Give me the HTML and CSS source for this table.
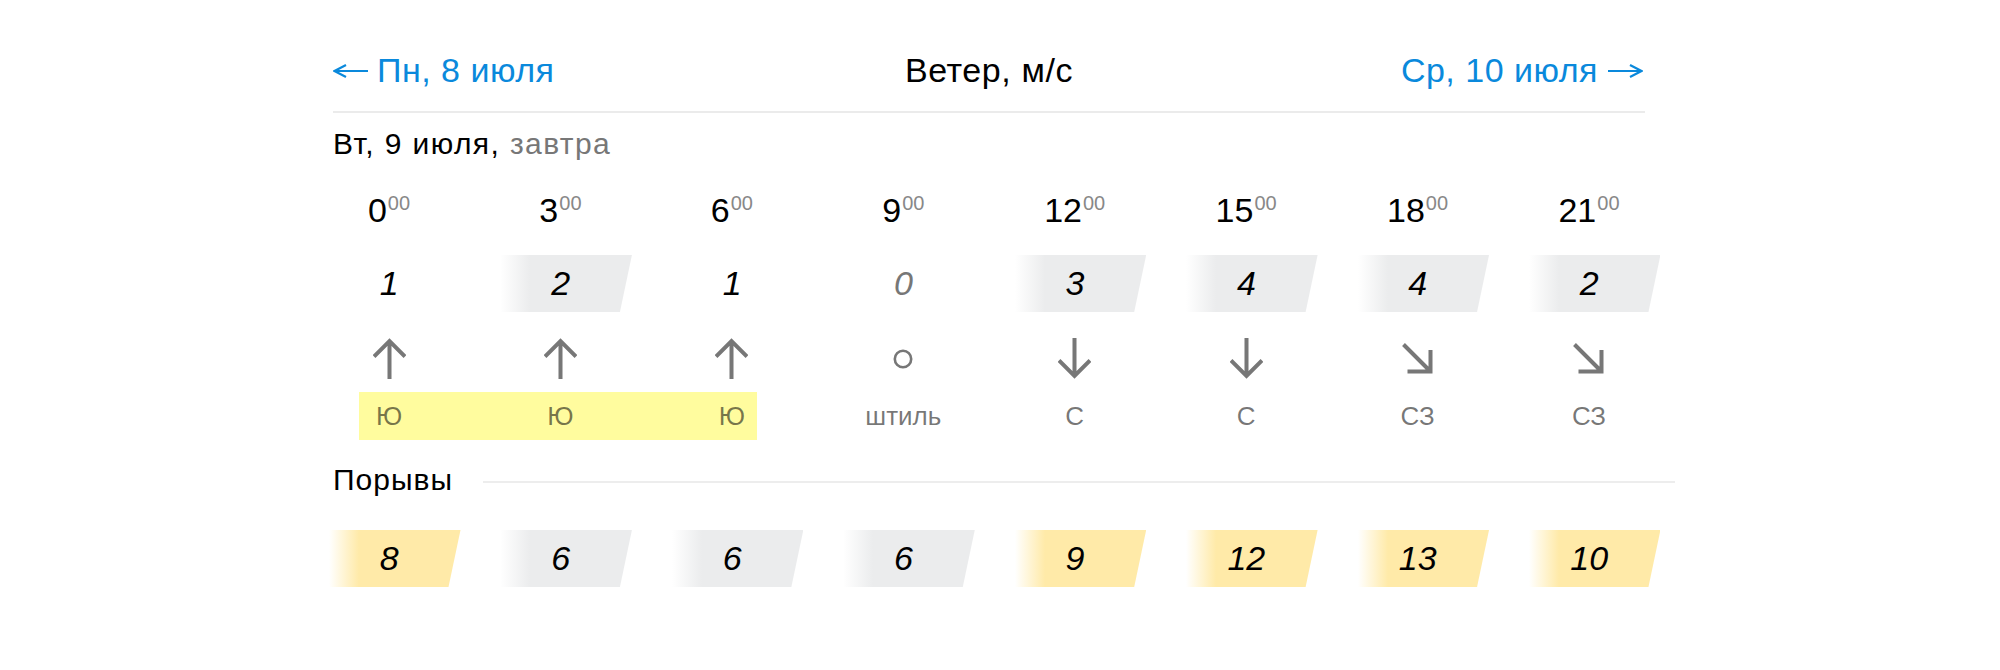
FILE: index.html
```html
<!DOCTYPE html>
<html lang="ru">
<head>
<meta charset="utf-8">
<title>Ветер, м/с</title>
<link rel="stylesheet" href="styles.css">
</head>
<body>
<div class="page">
  <nav class="nav">
    <a class="nav-link nav-prev" href="#"><svg class="nav-arrow nav-arrow-left" viewBox="0 0 35 14"><path d="M1.5 7H35M13 1L1.5 7L13 13"/></svg>Пн, 8 июля</a>
    <h1 class="nav-title">Ветер, м/с</h1>
    <a class="nav-link nav-next" href="#">Ср, 10 июля<svg class="nav-arrow nav-arrow-right" viewBox="0 0 35 14"><path d="M0 7H33.5M22 1L33.5 7L22 13"/></svg></a>
  </nav>

  <div class="day">Вт, 9 июля, <span class="day-rel">завтра</span></div>

  <div class="row hours">
    <div class="hour">0<span class="min">00</span></div>
    <div class="hour">3<span class="min">00</span></div>
    <div class="hour">6<span class="min">00</span></div>
    <div class="hour">9<span class="min">00</span></div>
    <div class="hour">12<span class="min">00</span></div>
    <div class="hour">15<span class="min">00</span></div>
    <div class="hour">18<span class="min">00</span></div>
    <div class="hour">21<span class="min">00</span></div>
  </div>

  <div class="row vals">
    <div class="val">1</div>
    <div class="val bar-gray">2</div>
    <div class="val">1</div>
    <div class="val val-calm">0</div>
    <div class="val bar-gray">3</div>
    <div class="val bar-gray">4</div>
    <div class="val bar-gray">4</div>
    <div class="val bar-gray">2</div>
  </div>

  <div class="row dirs">
    <div class="dir"><svg class="ic ic-arrow" viewBox="0 0 33 41"><path d="M16.5 3V41M1 18.5L16.5 3L32 18.5"/></svg></div>
    <div class="dir"><svg class="ic ic-arrow" viewBox="0 0 33 41"><path d="M16.5 3V41M1 18.5L16.5 3L32 18.5"/></svg></div>
    <div class="dir"><svg class="ic ic-arrow" viewBox="0 0 33 41"><path d="M16.5 3V41M1 18.5L16.5 3L32 18.5"/></svg></div>
    <div class="dir"><svg class="ic ic-calm" viewBox="0 0 22 22"><circle cx="11" cy="11" r="8.2"/></svg></div>
    <div class="dir"><svg class="ic ic-arrow" viewBox="0 0 33 41"><path d="M16.5 0V38M1 22.5L16.5 38L32 22.5"/></svg></div>
    <div class="dir"><svg class="ic ic-arrow" viewBox="0 0 33 41"><path d="M16.5 0V38M1 22.5L16.5 38L32 22.5"/></svg></div>
    <div class="dir"><svg class="ic ic-diag" viewBox="0 0 31 31"><path d="M1.5 1.5L28 28M28.5 7V28.5H5.5"/></svg></div>
    <div class="dir"><svg class="ic ic-diag" viewBox="0 0 31 31"><path d="M1.5 1.5L28 28M28.5 7V28.5H5.5"/></svg></div>
  </div>

  <div class="row labels hl-first-three">
    <div class="lbl">Ю</div>
    <div class="lbl">Ю</div>
    <div class="lbl">Ю</div>
    <div class="lbl">штиль</div>
    <div class="lbl">С</div>
    <div class="lbl">С</div>
    <div class="lbl">СЗ</div>
    <div class="lbl">СЗ</div>
  </div>

  <div class="gust-head">
    <span class="gust-title">Порывы</span>
    <span class="gust-line"></span>
  </div>

  <div class="row vals gusts">
    <div class="val bar-yellow">8</div>
    <div class="val bar-gray">6</div>
    <div class="val bar-gray">6</div>
    <div class="val bar-gray">6</div>
    <div class="val bar-yellow">9</div>
    <div class="val bar-yellow">12</div>
    <div class="val bar-yellow">13</div>
    <div class="val bar-yellow">10</div>
  </div>
</div>
</body>
</html>
```

FILE: styles.css
```css
html, body {
  margin: 0;
  padding: 0;
  background: #fff;
}

body {
  font-family: "Liberation Sans", Arial, Helvetica, sans-serif;
  color: #000;
}

.page {
  width: 1312px;
  margin-left: 333px;
  padding-top: 50px;
}

/* top navigation */
.nav {
  display: grid;
  grid-template-columns: 1fr auto 1fr;
  align-items: center;
  padding-bottom: 21px;
  border-bottom: 2px solid #ebebeb;
}

.nav-link {
  font-size: 34px;
  line-height: 40px;
  letter-spacing: 0.5px;
  color: #0a89dc;
  text-decoration: none;
  white-space: nowrap;
}

.nav-prev {
  justify-self: start;
}

.nav-next {
  justify-self: end;
  margin-right: 2px;
}

.nav-arrow {
  width: 35px;
  height: 14px;
  vertical-align: middle;
  fill: none;
  stroke: currentColor;
  stroke-width: 2.2;
  position: relative;
  top: -2px;
}

.nav-arrow-left {
  margin-right: 9px;
}

.nav-arrow-right {
  margin-left: 10px;
}

.nav-title {
  margin: 0;
  font-size: 34px;
  line-height: 40px;
  letter-spacing: 0.6px;
  font-weight: normal;
  color: #000;
}

/* day header */
.day {
  margin-top: 13px;
  font-size: 30px;
  line-height: 36px;
  letter-spacing: 1.4px;
}

.day-rel {
  color: #777;
}

/* shared 8-column rows */
.row {
  display: grid;
  grid-template-columns: repeat(8, 1fr);
  margin-left: -29.7px;
  margin-right: -29.7px;
}

/* hours */
.hours {
  margin-top: 28px;
}

.hour {
  font-size: 34px;
  line-height: 40px;
  text-align: center;
}

.min {
  font-size: 20px;
  line-height: 0;
  vertical-align: 12px;
  color: #888;
  margin-left: 1px;
}

/* speed values */
.vals {
  margin-top: 25px;
}

.val {
  box-sizing: border-box;
  margin-left: 25.7px;
  width: 131.5px;
  height: 57px;
  padding-right: 11px;
  font-size: 34px;
  line-height: 57px;
  font-style: italic;
  text-align: center;
  clip-path: polygon(0 0, 100% 0, calc(100% - 12px) 100%, 0 100%);
}

.val-calm {
  color: #777;
}

.bar-gray {
  background: linear-gradient(to right, rgba(235, 236, 237, 0) 0, #ebeced 30px);
}

.bar-yellow {
  background: linear-gradient(to right, rgba(255, 234, 168, 0) 0, #ffeaa8 30px);
}

/* direction icons */
.dirs {
  padding-top: 26px;
  padding-bottom: 13px;
}

.dir {
  height: 41px;
  display: flex;
  align-items: center;
  justify-content: center;
}

.ic {
  display: block;
  fill: none;
  stroke: #777;
  stroke-width: 4;
  stroke-linecap: butt;
  stroke-linejoin: miter;
}

.ic-arrow {
  width: 33px;
  height: 41px;
}

.ic-calm {
  width: 22px;
  height: 22px;
  stroke-width: 2.6;
  margin-top: 1px;
}

.ic-diag {
  width: 31px;
  height: 31px;
}

/* direction labels */
.labels {
  height: 48px;
}

.hl-first-three {
  background-image: linear-gradient(#fffc9e, #fffc9e);
  background-repeat: no-repeat;
  background-position: 55.6px 0;
  background-size: 398px 100%;
}

.lbl {
  font-size: 26px;
  line-height: 49px;
  text-align: center;
  color: rgba(0, 0, 0, 0.54);
}

/* gusts */
.gust-head {
  display: flex;
  align-items: center;
  margin-top: 22px;
  margin-right: -29.7px;
}

.gust-title {
  font-size: 30px;
  line-height: 36px;
  letter-spacing: 1px;
}

.gust-line {
  flex: 1;
  height: 2px;
  margin-left: 30px;
  margin-top: 4px;
  background: #ededed;
}

.gusts {
  margin-top: 32px;
}
```
